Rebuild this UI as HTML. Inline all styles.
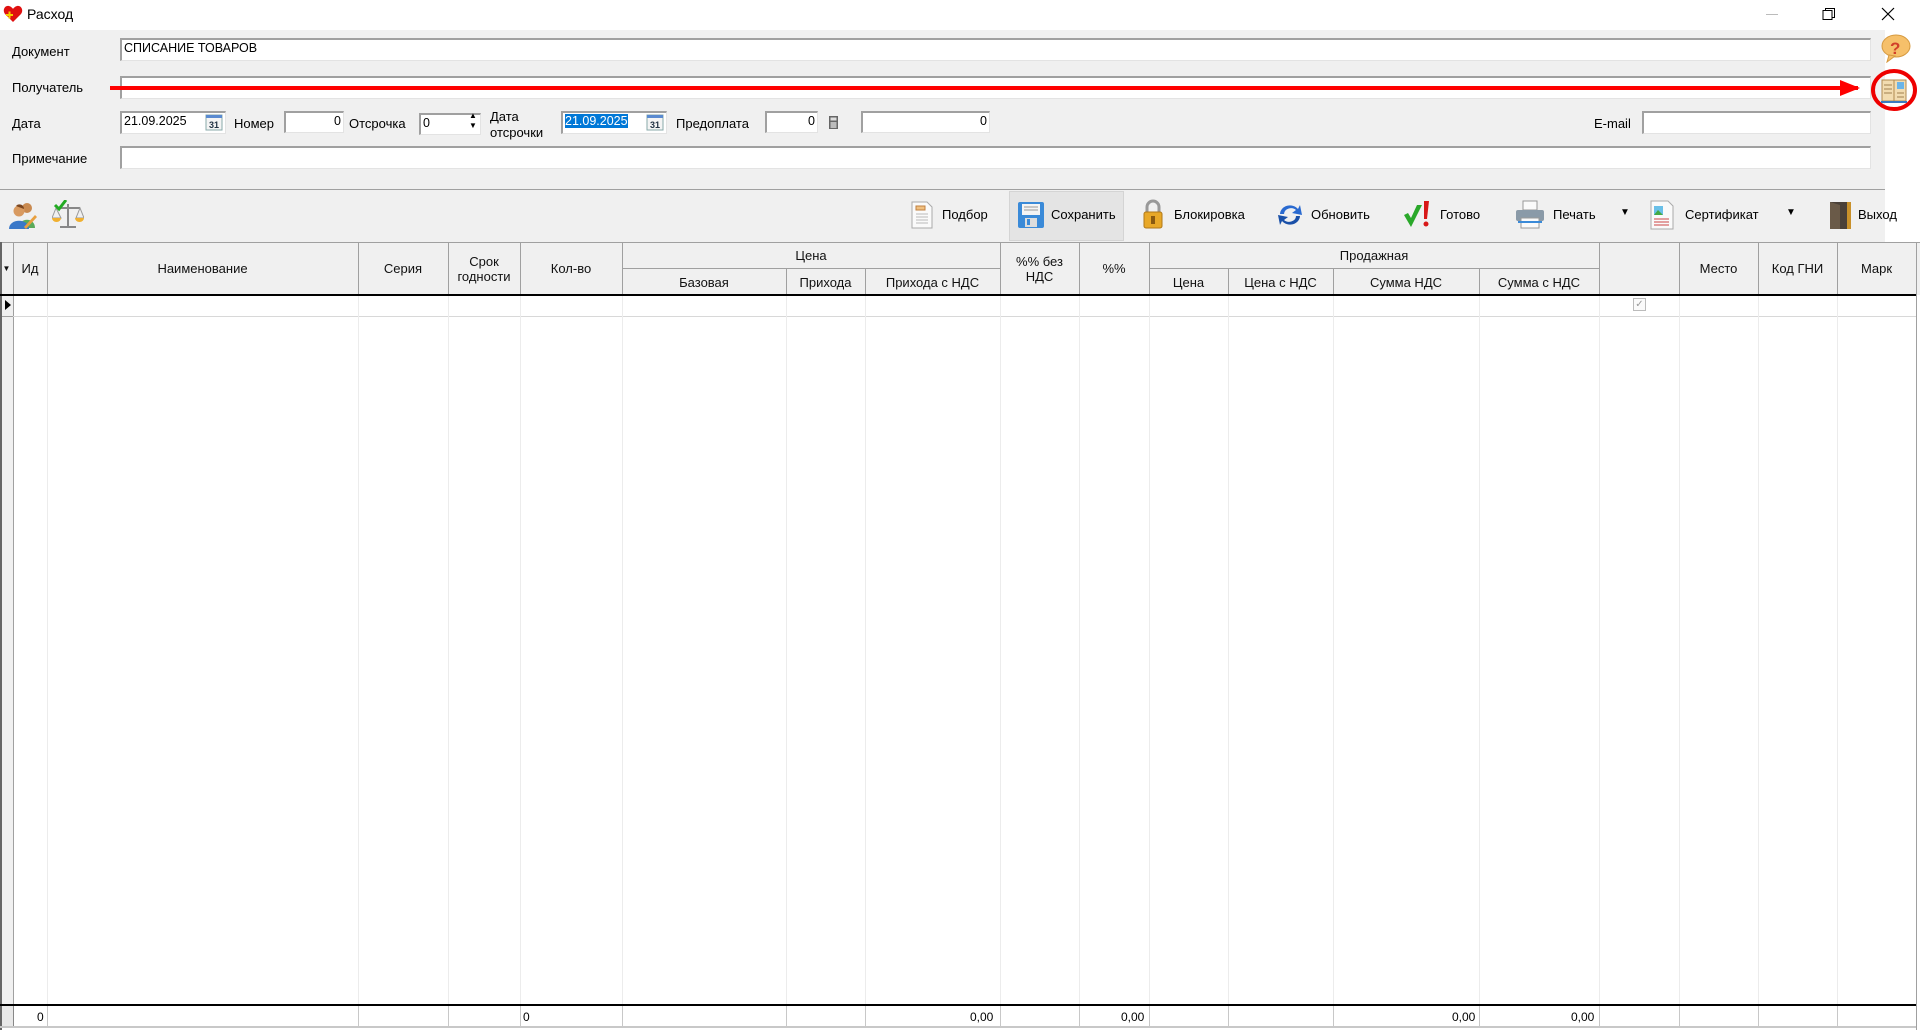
<!DOCTYPE html>
<html><head><meta charset="utf-8"><style>
*{box-sizing:border-box;margin:0;padding:0}
body{width:1920px;height:1030px;background:#fff;font-family:"Liberation Sans",sans-serif;font-size:13px;color:#000;position:relative;overflow:hidden}
.a{position:absolute}
.lbl{position:absolute;font-size:13px;white-space:nowrap}
.inp{position:absolute;background:#fff;border-top:2px solid #a0a0a0;border-left:2px solid #a0a0a0;border-right:1px solid #e3e3e3;border-bottom:1px solid #e3e3e3;font-size:12.5px;padding:1px 2px;white-space:nowrap}
.hc{position:absolute;display:flex;align-items:center;justify-content:center;text-align:center;font-size:13px;line-height:15px;color:#111}
.vl{position:absolute;width:1px;background:#a0a0a0}
.bl{position:absolute;width:1px;top:316px;height:689px;background:#ececec}
.fl{position:absolute;width:1px;top:1006px;height:20px;background:#c8c8c8}
.tb{position:absolute;top:203px;font-size:13px;white-space:nowrap}
.ft{position:absolute;top:1010px;font-size:12px}
</style></head><body>
<svg class="a" style="left:3px;top:5px" width="20" height="18" viewBox="0 0 20 18"><path d="M10 17 L2 9 C-1 5 2 0 6 1 C8 1.5 9.5 3 10 4 C10.5 3 12 1.5 14 1 C18 0 21 5 18 9 Z" fill="#e01010"/><rect x="3" y="9" width="7" height="2" fill="#f4d000"/><rect x="5.5" y="6.5" width="2" height="7" fill="#f4d000"/></svg>
<div class="lbl" style="left:27px;top:6px;font-size:14px">Расход</div>
<div class="a" style="left:1766px;top:14px;width:12px;height:1px;background:#bbb"></div>
<svg class="a" style="left:1822px;top:7px" width="14" height="14"><rect x="1" y="3.5" width="9" height="9" fill="none" stroke="#000"/><path d="M3.5 3.5V1.5H12.5V10.5H10" fill="none" stroke="#000"/></svg>
<svg class="a" style="left:1881px;top:7px" width="14" height="14"><path d="M1 1L13 13M13 1L1 13" stroke="#000" stroke-width="1.2"/></svg>
<div class="a" style="left:0;top:30px;width:1920px;height:159px;background:#f0f0f0"></div>
<div class="a" style="left:1885px;top:30px;width:35px;height:1000px;background:#fff"></div>
<div class="lbl" style="left:12px;top:44px">Документ</div>
<div class="inp" style="left:120px;top:38px;width:1751px;height:23px">СПИСАНИЕ ТОВАРОВ</div>
<div class="lbl" style="left:12px;top:80px">Получатель</div>
<div class="inp" style="left:120px;top:76px;width:1751px;height:23px"></div>
<div class="lbl" style="left:12px;top:116px">Дата</div>
<div class="inp" style="left:120px;top:111px;width:106px;height:23px">21.09.2025</div>
<svg class="a" style="left:205px;top:114px" width="18" height="17"><rect x="1" y="1" width="16" height="15" fill="#f4f4f4" stroke="#8aa"/><rect x="1" y="1" width="16" height="3" fill="#5a8ad0"/><text x="4" y="14" font-size="9" font-family="Liberation Sans" font-weight="bold" fill="#234">31</text></svg>
<div class="lbl" style="left:234px;top:116px">Номер</div>
<div class="inp" style="left:284px;top:111px;width:60px;height:22px;text-align:right">0</div>
<div class="lbl" style="left:349px;top:116px">Отсрочка</div>
<div class="inp" style="left:419px;top:113px;width:62px;height:22px">0</div>
<div class="lbl" style="left:469px;top:111px;font-size:8px">▲</div>
<div class="lbl" style="left:469px;top:121px;font-size:8px">▼</div>
<div class="lbl" style="left:490px;top:109px;line-height:16px">Дата<br>отсрочки</div>
<div class="inp" style="left:561px;top:111px;width:106px;height:23px"><span style="background:#0078d7;color:#fff">21.09.2025</span></div>
<svg class="a" style="left:646px;top:114px" width="18" height="17"><rect x="1" y="1" width="16" height="15" fill="#f4f4f4" stroke="#8aa"/><rect x="1" y="1" width="16" height="3" fill="#5a8ad0"/><text x="4" y="14" font-size="9" font-family="Liberation Sans" font-weight="bold" fill="#234">31</text></svg>
<div class="lbl" style="left:676px;top:116px">Предоплата</div>
<div class="inp" style="left:765px;top:111px;width:53px;height:22px;text-align:right">0</div>
<svg class="a" style="left:828px;top:115px" width="11" height="15"><rect x="1" y="1" width="9" height="13" fill="#666"/><rect x="2.5" y="2.5" width="6" height="3" fill="#ddd"/><rect x="2.5" y="7" width="6" height="6" fill="#bbb"/></svg>
<div class="inp" style="left:861px;top:111px;width:129px;height:22px;text-align:right">0</div>
<div class="lbl" style="left:1594px;top:116px">E-mail</div>
<div class="inp" style="left:1642px;top:111px;width:229px;height:23px"></div>
<div class="lbl" style="left:12px;top:151px">Примечание</div>
<div class="inp" style="left:120px;top:146px;width:1751px;height:23px"></div>
<svg class="a" style="left:1879px;top:33px" width="34" height="30"><ellipse cx="17" cy="13" rx="14" ry="11" fill="#f6c06a" stroke="#d69a40"/><path d="M10 22 L8 29 L16 23Z" fill="#f6c06a" stroke="#d69a40"/><text x="11" y="21" font-size="17" font-weight="bold" font-family="Liberation Sans" fill="#d2402a">?</text></svg>
<svg class="a" style="left:1870px;top:68px" width="48" height="46"><ellipse cx="24" cy="22" rx="21" ry="19" fill="none" stroke="#e00" stroke-width="4"/><path d="M12 12 H24 V33 H12Z" fill="#f2dcb0" stroke="#b08a50"/><path d="M24 12 H36 V33 H24Z" fill="#f2dcb0" stroke="#b08a50"/><rect x="27" y="14" width="7" height="7" fill="#6ab4e8"/><path d="M14 17h8M14 21h8M14 25h8M27 25h7M27 29h7" stroke="#a08050"/><path d="M11 34H37" stroke="#3a7ac0" stroke-width="2"/></svg>
<div class="a" style="left:110px;top:86px;width:1748px;height:4px;background:#f00"></div>
<svg class="a" style="left:1840px;top:80px" width="20" height="16"><path d="M0 0 L20 8 L0 16Z" fill="#f00"/></svg>
<div class="a" style="left:0;top:189px;width:1885px;height:1px;background:#a0a0a0"></div>
<div class="a" style="left:0;top:190px;width:1885px;height:52px;background:#f0f0f0"></div>
<div class="a" style="left:1009px;top:191px;width:115px;height:50px;background:#e4e4e4;border:1px solid #d4d4d4"></div>
<svg class="a" style="left:8px;top:201px" width="30" height="28"><circle cx="19" cy="7" r="5" fill="#c98a50"/><path d="M11 27 C11 16 27 16 27 27Z" fill="#5aaa5a"/><circle cx="11" cy="10" r="5.5" fill="#d89a60"/><path d="M8 5 C10 2 16 3 16 8" fill="#7a4520"/><path d="M1 28 C1 17 21 17 21 28Z" fill="#3a78c8"/><path d="M16 26 L27 14 L29 16 L18 28Z" fill="#e8a040"/></svg>
<svg class="a" style="left:52px;top:200px" width="32" height="30"><path d="M16 4V26M4 8H28M8 27H24" stroke="#888" stroke-width="2"/><path d="M4 8 L0 18 H9Z M28 8 L24 18 H32Z" fill="none" stroke="#999"/><path d="M0 18 A4.5 4 0 0 0 9 18Z M23 18 A4.5 4 0 0 0 32 18Z" fill="#f0b030"/><path d="M3 5 L7 9 L14 0" stroke="#2a2" stroke-width="3" fill="none"/></svg>
<svg class="a" style="left:910px;top:201px" width="24" height="28"><path d="M2 1H17L22 6V27H2Z" fill="#fafafa" stroke="#aaa"/><rect x="6" y="5" width="9" height="4" fill="#f0c080" stroke="#c08040"/><path d="M6 13h12M6 16h12M6 19h12M6 22h12" stroke="#bbb"/></svg>
<div class="tb" style="left:942px;top:207px">Подбор</div>
<svg class="a" style="left:1017px;top:201px" width="28" height="28"><rect x="1" y="1" width="26" height="26" rx="2" fill="#3a8ad8"/><rect x="5" y="3" width="18" height="11" fill="#f4f4f4"/><path d="M7 6h14M7 9h14" stroke="#999"/><rect x="8" y="17" width="12" height="9" fill="#ddd"/><rect x="10" y="18" width="3" height="6" fill="#3a8ad8"/></svg>
<div class="tb" style="left:1051px;top:207px">Сохранить</div>
<svg class="a" style="left:1142px;top:199px" width="22" height="30"><path d="M5 13V8A6 6 0 0 1 17 8V13" fill="none" stroke="#999" stroke-width="3"/><rect x="2" y="13" width="18" height="16" rx="2" fill="#e8a828" stroke="#b07818"/><rect x="9" y="17" width="4" height="8" fill="#8a5a10"/></svg>
<div class="tb" style="left:1174px;top:207px">Блокировка</div>
<svg class="a" style="left:1276px;top:202px" width="28" height="26"><path d="M4 12 A10 9 0 0 1 22 7 L24 3 L26 13 L16 11 L20 8 A7 6 0 0 0 8 12Z" fill="#2a6ad0"/><path d="M24 14 A10 9 0 0 1 6 19 L4 23 L2 13 L12 15 L8 18 A7 6 0 0 0 20 14Z" fill="#1a50a8"/></svg>
<div class="tb" style="left:1311px;top:207px">Обновить</div>
<svg class="a" style="left:1402px;top:199px" width="30" height="30"><path d="M2 16 L9 28 L20 6 L15 6 L9 19 L6 14Z" fill="#2aa82a"/><path d="M22 2 L27 2 L25 20 L22 20Z" fill="#d81818"/><circle cx="24" cy="25" r="2.5" fill="#d81818"/></svg>
<div class="tb" style="left:1440px;top:207px">Готово</div>
<svg class="a" style="left:1515px;top:200px" width="30" height="30"><rect x="8" y="1" width="14" height="9" fill="#fafafa" stroke="#999"/><rect x="1" y="10" width="28" height="11" rx="2" fill="#8a9aa8"/><rect x="6" y="18" width="18" height="10" fill="#fafafa" stroke="#999"/><rect x="3" y="21" width="24" height="2" fill="#3a8ad8"/></svg>
<div class="tb" style="left:1553px;top:207px">Печать</div>
<div class="tb" style="left:1620px;top:207px;font-size:10px">▼</div>
<svg class="a" style="left:1649px;top:200px" width="26" height="30"><path d="M2 1H19L24 6V29H2Z" fill="#fafafa" stroke="#aaa"/><rect x="5" y="6" width="9" height="9" fill="#6ac0e8"/><path d="M5 15 L9 10 L14 15Z" fill="#4a4"/><path d="M5 19h15M5 22h15M5 25h15" stroke="#c44"/></svg>
<div class="tb" style="left:1685px;top:207px">Сертификат</div>
<div class="tb" style="left:1786px;top:207px;font-size:10px">▼</div>
<svg class="a" style="left:1826px;top:200px" width="28" height="30"><rect x="4" y="2" width="18" height="27" fill="#4a4038"/><path d="M4 2 L14 5 V29 L4 29Z" fill="#6a5a48"/><rect x="21" y="2" width="4" height="27" fill="#c8902a"/></svg>
<div class="tb" style="left:1858px;top:207px">Выход</div>
<div class="a" style="left:0;top:242px;width:1920px;height:53px;background:#f0f0f0;border-top:1px solid #a0a0a0"></div>
<div class="a" style="left:0;top:242px;width:2px;height:788px;background:#666"></div>
<div class="a" style="left:1916px;top:242px;width:1px;height:788px;background:#a0a0a0"></div>
<div class="vl" style="left:13px;top:242px;height:53px"></div>
<div class="vl" style="left:47px;top:242px;height:53px"></div>
<div class="vl" style="left:358px;top:242px;height:53px"></div>
<div class="vl" style="left:448px;top:242px;height:53px"></div>
<div class="vl" style="left:520px;top:242px;height:53px"></div>
<div class="vl" style="left:622px;top:242px;height:53px"></div>
<div class="vl" style="left:1000px;top:242px;height:53px"></div>
<div class="vl" style="left:1079px;top:242px;height:53px"></div>
<div class="vl" style="left:1149px;top:242px;height:53px"></div>
<div class="vl" style="left:1599px;top:242px;height:53px"></div>
<div class="vl" style="left:1679px;top:242px;height:53px"></div>
<div class="vl" style="left:1758px;top:242px;height:53px"></div>
<div class="vl" style="left:1837px;top:242px;height:53px"></div>
<div class="a" style="left:622px;top:268px;width:378px;height:1px;background:#a0a0a0"></div>
<div class="a" style="left:1149px;top:268px;width:450px;height:1px;background:#a0a0a0"></div>
<div class="vl" style="left:786px;top:269px;height:26px"></div>
<div class="vl" style="left:865px;top:269px;height:26px"></div>
<div class="vl" style="left:1228px;top:269px;height:26px"></div>
<div class="vl" style="left:1333px;top:269px;height:26px"></div>
<div class="vl" style="left:1479px;top:269px;height:26px"></div>
<div class="hc" style="left:0;top:242px;width:13px;height:53px;font-size:8px">▼</div>
<div class="hc" style="left:13px;top:242px;width:34px;height:53px">Ид</div>
<div class="hc" style="left:47px;top:242px;width:311px;height:53px">Наименование</div>
<div class="hc" style="left:358px;top:242px;width:90px;height:53px">Серия</div>
<div class="hc" style="left:448px;top:242px;width:72px;height:53px">Срок<br>годности</div>
<div class="hc" style="left:520px;top:242px;width:102px;height:53px">Кол-во</div>
<div class="hc" style="left:622px;top:242px;width:378px;height:27px">Цена</div>
<div class="hc" style="left:622px;top:269px;width:164px;height:26px">Базовая</div>
<div class="hc" style="left:786px;top:269px;width:79px;height:26px">Прихода</div>
<div class="hc" style="left:865px;top:269px;width:135px;height:26px">Прихода с НДС</div>
<div class="hc" style="left:1000px;top:242px;width:79px;height:53px">%% без<br>НДС</div>
<div class="hc" style="left:1079px;top:242px;width:70px;height:53px">%%</div>
<div class="hc" style="left:1149px;top:242px;width:450px;height:27px">Продажная</div>
<div class="hc" style="left:1149px;top:269px;width:79px;height:26px">Цена</div>
<div class="hc" style="left:1228px;top:269px;width:105px;height:26px">Цена с НДС</div>
<div class="hc" style="left:1333px;top:269px;width:146px;height:26px">Сумма НДС</div>
<div class="hc" style="left:1479px;top:269px;width:120px;height:26px">Сумма с НДС</div>
<div class="hc" style="left:1679px;top:242px;width:79px;height:53px">Место</div>
<div class="hc" style="left:1758px;top:242px;width:79px;height:53px">Код ГНИ</div>
<div class="hc" style="left:1837px;top:242px;width:79px;height:53px">Марк</div>
<div class="a" style="left:0;top:294px;width:1916px;height:2px;background:#000"></div>
<div class="a" style="left:2px;top:296px;width:11px;height:709px;background:#f0f0f0"></div>
<div class="bl" style="left:13px;top:296px;height:709px;background:#a0a0a0"></div>
<svg class="a" style="left:4px;top:299px" width="8" height="12"><path d="M1 1 L7 6 L1 11Z" fill="#000"/></svg>
<div class="a" style="left:13px;top:316px;width:1903px;height:1px;background:#d8d8d8"></div>
<div class="a" style="left:2px;top:316px;width:11px;height:1px;background:#a0a0a0"></div>
<div class="bl" style="left:47px;top:296px;height:709px"></div>
<div class="bl" style="left:358px;top:296px;height:709px"></div>
<div class="bl" style="left:448px;top:296px;height:709px"></div>
<div class="bl" style="left:520px;top:296px;height:709px"></div>
<div class="bl" style="left:622px;top:296px;height:709px"></div>
<div class="bl" style="left:786px;top:296px;height:709px"></div>
<div class="bl" style="left:865px;top:296px;height:709px"></div>
<div class="bl" style="left:1000px;top:296px;height:709px"></div>
<div class="bl" style="left:1079px;top:296px;height:709px"></div>
<div class="bl" style="left:1149px;top:296px;height:709px"></div>
<div class="bl" style="left:1228px;top:296px;height:709px"></div>
<div class="bl" style="left:1333px;top:296px;height:709px"></div>
<div class="bl" style="left:1479px;top:296px;height:709px"></div>
<div class="bl" style="left:1599px;top:296px;height:709px"></div>
<div class="bl" style="left:1679px;top:296px;height:709px"></div>
<div class="bl" style="left:1758px;top:296px;height:709px"></div>
<div class="bl" style="left:1837px;top:296px;height:709px"></div>
<div class="a" style="left:1633px;top:298px;width:13px;height:13px;border:1px solid #bbb;background:#fafafa;color:#999;font-size:10px;line-height:11px;text-align:center">✓</div>
<div class="a" style="left:0;top:1004px;width:1916px;height:2px;background:#000"></div>
<div class="a" style="left:2px;top:1006px;width:11px;height:20px;background:#e8e8e8"></div>
<div class="fl" style="left:13px;background:#888"></div>
<div class="fl" style="left:47px"></div>
<div class="fl" style="left:358px"></div>
<div class="fl" style="left:448px"></div>
<div class="fl" style="left:520px"></div>
<div class="fl" style="left:622px"></div>
<div class="fl" style="left:786px"></div>
<div class="fl" style="left:865px"></div>
<div class="fl" style="left:1000px"></div>
<div class="fl" style="left:1079px"></div>
<div class="fl" style="left:1149px"></div>
<div class="fl" style="left:1228px"></div>
<div class="fl" style="left:1333px"></div>
<div class="fl" style="left:1479px"></div>
<div class="fl" style="left:1599px"></div>
<div class="fl" style="left:1679px"></div>
<div class="fl" style="left:1758px"></div>
<div class="fl" style="left:1837px"></div>
<div class="a" style="left:0;top:1026px;width:1916px;height:2px;background:#c8c8c8"></div>
<div class="ft" style="left:37px">0</div>
<div class="ft" style="left:523px">0</div>
<div class="ft" style="left:970px">0,00</div>
<div class="ft" style="left:1121px">0,00</div>
<div class="ft" style="left:1452px">0,00</div>
<div class="ft" style="left:1571px">0,00</div>
</body></html>
